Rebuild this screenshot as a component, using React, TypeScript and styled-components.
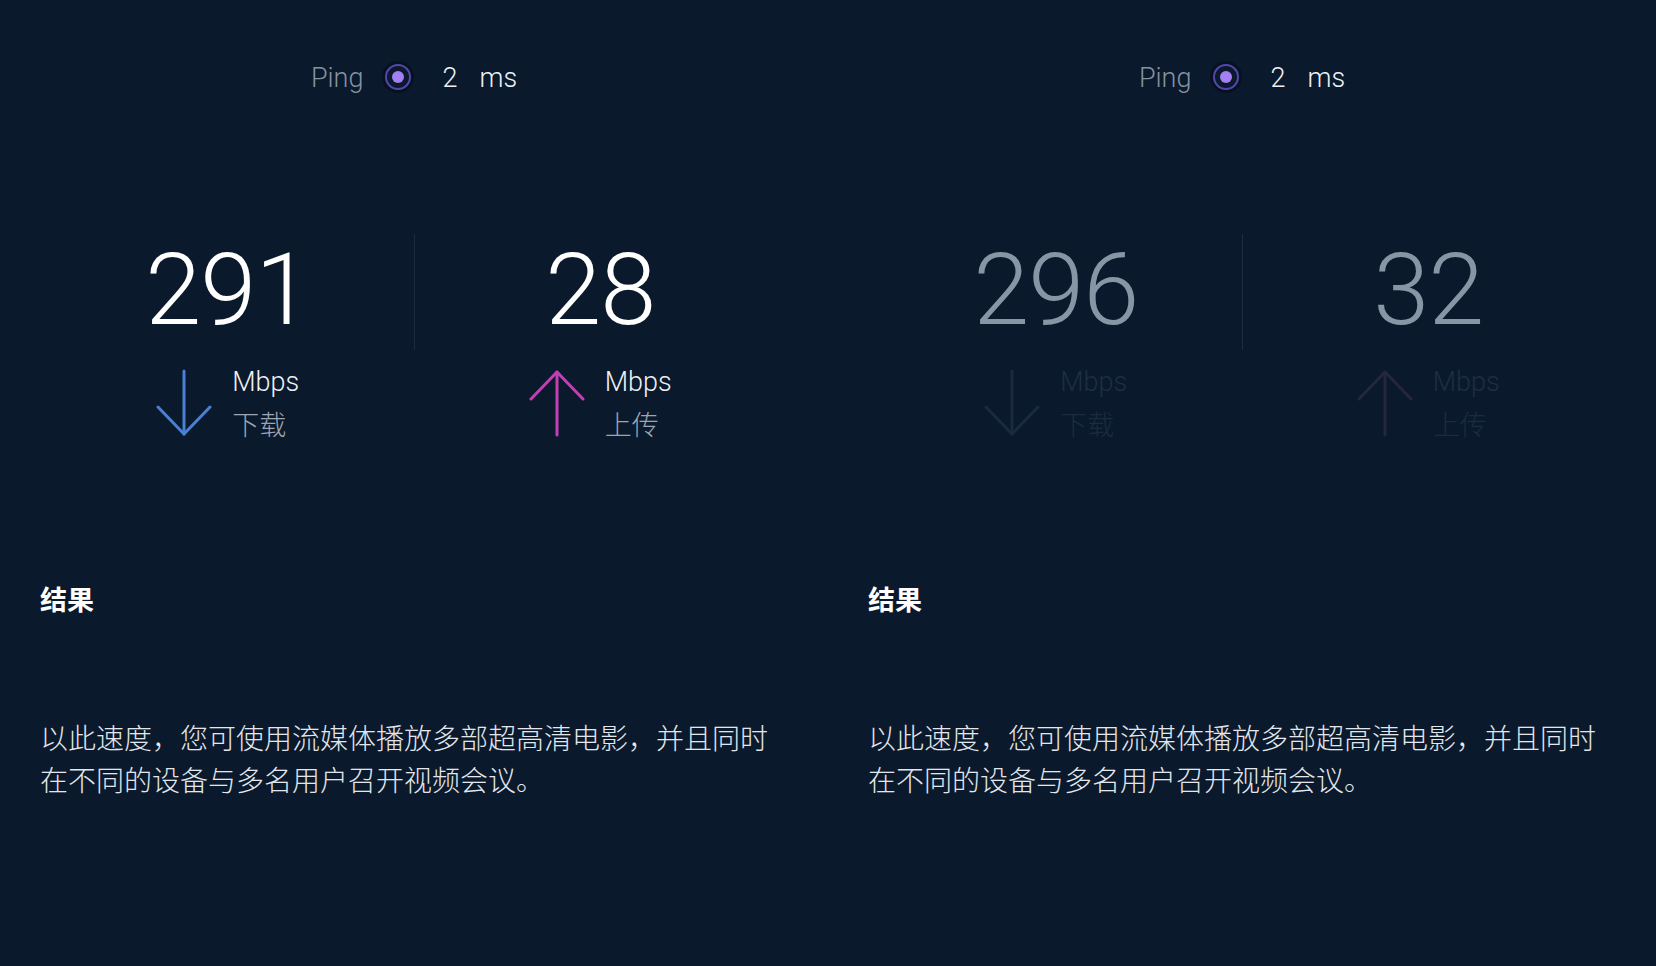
import React from "react";
import styled, { createGlobalStyle } from "styled-components";

const GlobalStyle = createGlobalStyle`
  html, body {
    margin: 0;
    padding: 0;
    background: #0a192b;
  }
  body {
    font-family: Roboto, "Liberation Sans", "Noto Sans CJK SC", sans-serif;
    font-weight: 300;
    -webkit-font-smoothing: antialiased;
  }
`;

const Page = styled.div`
  display: grid;
  grid-template-columns: 1fr 1fr;
  width: 1656px;
  height: 966px;
  background: #0a192b;
  overflow: hidden;
`;

const Column = styled.section`
  display: flex;
  flex-direction: column;
  min-width: 0;
`;

const PingRow = styled.div`
  display: flex;
  justify-content: center;
  align-items: center;
  height: 30px;
  margin-top: 63px;
  font-size: 27px;
  line-height: 30px;
`;

const PingLabel = styled.span`
  color: #8592a2;
`;

const PingDot = styled.span`
  display: inline-flex;
  align-items: center;
  justify-content: center;
  width: 22px;
  height: 22px;
  margin: -3px 31px 0 22px;
  border: 2px solid #5446ad;
  border-radius: 50%;
  box-shadow: 0 0 0 3px rgba(3, 10, 20, 0.45);

  &::after {
    content: "";
    width: 12px;
    height: 12px;
    border-radius: 50%;
    background: #a47ef3;
  }
`;

const PingValue = styled.span`
  color: #eef2f6;
`;

const PingUnit = styled.span`
  color: #eef2f6;
  margin-left: 22px;
`;

const StatsRow = styled.div`
  display: grid;
  grid-template-columns: 1fr 1px 1fr;
  align-items: start;
  margin: 141px 42px 0;
`;

const Divider = styled.div`
  width: 1px;
  height: 116px;
  background: #1c2b3d;
`;

const Stat = styled.div`
  display: flex;
  flex-direction: column;
  align-items: center;
  padding-top: 7px;
`;

const BigNumber = styled.div<{ $dim?: boolean }>`
  font-size: 101px;
  line-height: 97px;
  font-weight: 300;
  letter-spacing: -1px;
  color: ${(p) => (p.$dim ? "#8796a5" : "#ffffff")};
`;

const UnitRow = styled.div`
  display: flex;
  align-items: flex-start;
  gap: 20px;
  margin-top: 24px;
`;

const ArrowIcon = styled.svg`
  display: block;
  width: 56px;
  height: 68px;
  margin-top: 7px;
  flex: none;
`;

const Labels = styled.div`
  display: flex;
  flex-direction: column;
  font-size: 27px;
  line-height: 41px;
`;

const Unit = styled.span<{ $dim?: boolean }>`
  color: ${(p) => (p.$dim ? "#1e2f43" : "#eef1f5")};
`;

const Kind = styled.span<{ $dim?: boolean }>`
  font-family: "Noto Sans CJK SC", sans-serif;
  font-weight: 300;
  color: ${(p) => (p.$dim ? "#1c2c3f" : "#9ba6b2")};
`;

const Heading = styled.h2`
  margin: 137px 0 0;
  padding: 0 40px;
  font-family: "Noto Sans CJK SC", sans-serif;
  font-size: 27px;
  line-height: 36px;
  font-weight: 700;
  color: #ffffff;
`;

const Paragraph = styled.p`
  margin: 99px 0 0;
  padding: 0 40px;
  font-family: "Noto Sans CJK SC", sans-serif;
  font-size: 28px;
  line-height: 42px;
  font-weight: 300;
  color: #e3e7ec;
`;

type Dir = "down" | "up";

const Arrow: React.FC<{ dir: Dir; color: string }> = ({ dir, color }) => (
  <ArrowIcon viewBox="0 0 56 68" fill="none" stroke={color} strokeWidth={3} strokeLinecap="round" strokeLinejoin="round">
    {dir === "down" ? (
      <>
        <line x1="28" y1="2" x2="28" y2="65" />
        <polyline points="2,38 28,65 54,38" />
      </>
    ) : (
      <>
        <line x1="28" y1="3" x2="28" y2="66" />
        <polyline points="2,30 28,3 54,30" />
      </>
    )}
  </ArrowIcon>
);

type Result = {
  down: string;
  up: string;
  dim?: boolean;
};

const results: Result[] = [
  { down: "291", up: "28" },
  { down: "296", up: "32", dim: true },
];

const ResultColumn: React.FC<{ r: Result }> = ({ r }) => (
  <Column>
    <PingRow>
      <PingLabel>Ping</PingLabel>
      <PingDot />
      <PingValue>2</PingValue>
      <PingUnit>ms</PingUnit>
    </PingRow>
    <StatsRow>
      <Stat>
        <BigNumber $dim={r.dim}>{r.down}</BigNumber>
        <UnitRow>
          <Arrow dir="down" color={r.dim ? "#1a2b40" : "#4a80d4"} />
          <Labels>
            <Unit $dim={r.dim}>Mbps</Unit>
            <Kind $dim={r.dim}>下载</Kind>
          </Labels>
        </UnitRow>
      </Stat>
      <Divider />
      <Stat>
        <BigNumber $dim={r.dim}>{r.up}</BigNumber>
        <UnitRow>
          <Arrow dir="up" color={r.dim ? "#25263f" : "#c33fb4"} />
          <Labels>
            <Unit $dim={r.dim}>Mbps</Unit>
            <Kind $dim={r.dim}>上传</Kind>
          </Labels>
        </UnitRow>
      </Stat>
    </StatsRow>
    <Heading>结果</Heading>
    <Paragraph>以此速度，您可使用流媒体播放多部超高清电影，并且同时在不同的设备与多名用户召开视频会议。</Paragraph>
  </Column>
);

export default function App() {
  return (
    <>
      <GlobalStyle />
      <Page>
        {results.map((r, i) => (
          <ResultColumn key={i} r={r} />
        ))}
      </Page>
    </>
  );
}
